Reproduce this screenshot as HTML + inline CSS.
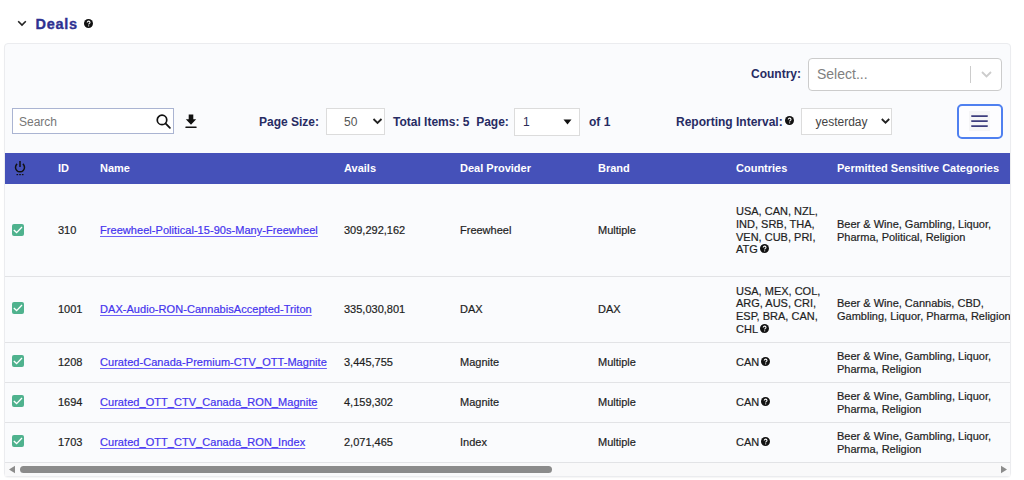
<!DOCTYPE html>
<html><head><meta charset="utf-8">
<style>
*{box-sizing:border-box;margin:0;padding:0}
html,body{width:1024px;height:480px;overflow:hidden;background:#fff;font-family:"Liberation Sans",sans-serif;}
.abs{position:absolute}
.title{position:absolute;left:35.5px;top:15px;font-size:14.5px;letter-spacing:0.7px;-webkit-text-stroke:0.35px #2e3192;font-weight:bold;color:#2e3192;line-height:19px}
.help{position:absolute;width:9px;height:9px;border-radius:50%;background:#111;color:#fff;font-size:8px;font-weight:bold;line-height:9px;text-align:center}
.panel{position:absolute;left:4px;top:43px;width:1007px;height:434px;border:1px solid #ebecef;border-radius:4px;background:#fafbfd;box-shadow:0 1px 1px rgba(0,0,0,0.04)}
.lbl{position:absolute;font-size:12px;font-weight:bold;color:#272b63;line-height:14px;white-space:pre}
.sel{position:absolute;background:#fff;border:1px solid #dcdcdc;font-size:12px;color:#444}
.thead{position:absolute;left:5px;top:153px;width:1005px;height:31px;background:#4551b9}
.th{position:absolute;top:9px;font-size:11px;font-weight:bold;color:#fff;line-height:13px;white-space:nowrap}
.row{position:absolute;left:5px;width:1005px;border-bottom:1px solid #e2e3e6;overflow:hidden}
.cell{position:absolute;top:0;bottom:0;padding-bottom:1px;display:flex;align-items:center;font-size:11px;color:#1e1e1e;white-space:nowrap;-webkit-text-stroke:0.2px currentColor}
.cell a{color:#4433ee;text-decoration:underline;text-decoration-color:#6d60f6;text-underline-offset:1.6px;letter-spacing:0.05px}
.ml{white-space:nowrap;line-height:12.65px;position:relative;top:1px}
.cb{position:absolute;left:7px;width:12px;height:12px;border-radius:2px;background:#4fb28e}
.cb svg{display:block}
.qi{display:inline-block;width:9px;height:9px;vertical-align:0px;margin-left:2px}
</style></head>
<body>
<!-- title -->
<svg class="abs" style="left:17px;top:20.4px" width="10" height="7" viewBox="0 0 10 7"><path d="M1.2 1.3 L5 5.1 L8.8 1.3" fill="none" stroke="#222" stroke-width="1.6"/></svg>
<div class="title">Deals</div>
<svg class="abs" style="left:84px;top:19px" width="9" height="9" viewBox="0 0 9 9"><circle cx="4.5" cy="4.5" r="4.5" fill="#111"/><path d="M3.2 3.6 C3.2 2.7 3.8 2.1 4.6 2.1 C5.4 2.1 6 2.6 6 3.4 C6 4.3 4.7 4.5 4.7 5.4" fill="none" stroke="#fff" stroke-width="1.05"/><circle cx="4.7" cy="6.8" r="0.6" fill="#fff"/></svg>

<div class="panel"></div>

<!-- toolbar row 1 -->
<div class="lbl" style="left:751px;top:67px">Country:</div>
<div class="abs" style="left:808px;top:58px;width:194px;height:33px;background:#fff;border:1px solid #cccccc;border-radius:4px"></div>
<div class="abs" style="left:817px;top:66px;font-size:14px;color:#808080;line-height:16px">Select...</div>
<div class="abs" style="left:970px;top:66px;width:1px;height:17px;background:#cccccc"></div>
<svg class="abs" style="left:980px;top:70px" width="13" height="9" viewBox="0 0 13 9"><path d="M2 2 L6.5 6.5 L11 2" fill="none" stroke="#cccccc" stroke-width="1.8"/></svg>

<!-- toolbar row 2 -->
<div class="abs" style="left:12px;top:108px;width:162px;height:26px;background:#fff;border:1px solid #aab4d2"></div>
<div class="abs" style="left:19px;top:114.5px;font-size:12px;color:#777;line-height:14px">Search</div>
<svg class="abs" style="left:155px;top:113px" width="18" height="18" viewBox="0 0 18 18"><circle cx="7" cy="6.9" r="4.75" fill="none" stroke="#111" stroke-width="1.7"/><path d="M10.5 10.4 L14.9 14.8" stroke="#111" stroke-width="1.8" stroke-linecap="round"/></svg>
<svg class="abs" style="left:184px;top:113px" width="14" height="16" viewBox="0 0 14 16"><path d="M4.7 1.4 H9.3 V6.2 H12.2 L7 11.8 L1.8 6.2 H4.7 Z" fill="#111"/><rect x="1.4" y="13.5" width="11.2" height="1.6" rx="0.5" fill="#111"/></svg>

<div class="lbl" style="left:259px;top:115px">Page Size:</div>
<div class="sel" style="left:326px;top:108px;width:59px;height:27px"></div>
<div class="abs" style="left:344px;top:115px;font-size:12px;color:#555;line-height:14px">50</div>
<svg class="abs" style="left:372px;top:117px" width="11" height="8" viewBox="0 0 11 8"><path d="M1.5 2 L5.5 6 L9.5 2" fill="none" stroke="#222" stroke-width="1.8"/></svg>

<div class="lbl" style="left:393px;top:115px">Total Items: 5  Page:</div>
<div class="sel" style="left:514px;top:108px;width:66px;height:28px"></div>
<div class="abs" style="left:523px;top:115px;font-size:12px;color:#2b2b55;line-height:14px">1</div>
<svg class="abs" style="left:563px;top:119px" width="9" height="6" viewBox="0 0 9 6"><path d="M0.5 0.5 H8.5 L4.5 5.5 Z" fill="#111"/></svg>
<div class="lbl" style="left:589px;top:115px">of 1</div>

<div class="lbl" style="left:676px;top:115px">Reporting Interval:</div>
<svg class="abs" style="left:785px;top:116px" width="9" height="9" viewBox="0 0 9 9"><circle cx="4.5" cy="4.5" r="4.5" fill="#111"/><path d="M3.2 3.6 C3.2 2.7 3.8 2.1 4.6 2.1 C5.4 2.1 6 2.6 6 3.4 C6 4.3 4.7 4.5 4.7 5.4" fill="none" stroke="#fff" stroke-width="1.05"/><circle cx="4.7" cy="6.8" r="0.6" fill="#fff"/></svg>
<div class="sel" style="left:801px;top:108px;width:91px;height:27px"></div>
<div class="abs" style="left:815.5px;top:114.5px;font-size:12px;color:#444;line-height:14px">yesterday</div>
<svg class="abs" style="left:879.5px;top:117.3px" width="11" height="8" viewBox="0 0 11 8"><path d="M1.8 2 L5.5 5.7 L9.2 2" fill="none" stroke="#222" stroke-width="1.8"/></svg>

<div class="abs" style="left:956.5px;top:103.5px;width:46px;height:35px;border:2px solid #4f80f0;border-radius:5px;background:#fdfdff"></div>
<div class="abs" style="left:969px;top:111px;width:21px;height:20px;background:#f5f5f7"></div>
<svg class="abs" style="left:970px;top:113px" width="19" height="16" viewBox="0 0 19 16"><path d="M1.8 3.1 H17.2 M1.8 8.1 H17.2 M1.8 13.1 H17.2" stroke="#3d3d7e" stroke-width="1.6" stroke-linecap="round"/></svg>

<!-- table header -->
<div class="thead">
  <svg class="abs" style="left:9px;top:8px" width="12" height="15" viewBox="0 0 12 15"><path d="M3.1 2.9 A4.5 4.5 0 1 0 8.9 2.9" fill="none" stroke="#111" stroke-width="1.5"/><path d="M6 0 V6" stroke="#111" stroke-width="1.5"/><rect x="2.5" y="13" width="1.6" height="1.2" fill="#111"/><rect x="5.2" y="13" width="1.6" height="1.2" fill="#111"/><rect x="7.9" y="13" width="1.6" height="1.2" fill="#111"/></svg>
  <div class="th" style="left:53px">ID</div>
  <div class="th" style="left:95px">Name</div>
  <div class="th" style="left:339px">Avails</div>
  <div class="th" style="left:455px">Deal Provider</div>
  <div class="th" style="left:593px">Brand</div>
  <div class="th" style="left:731px">Countries</div>
  <div class="th" style="left:832px">Permitted Sensitive Categories</div>
</div>

<!-- rows -->
<div class="row" style="top:184px;height:93px">
  <div class="cb" style="top:40px"><svg width="12" height="12" viewBox="0 0 12 12"><path d="M1.8 6 L4.6 8.6 L10 3" fill="none" stroke="#fff" stroke-width="1.35"/></svg></div>
  <div class="cell" style="left:53px">310</div>
  <div class="cell" style="left:95px"><a>Freewheel-Political-15-90s-Many-Freewheel</a></div>
  <div class="cell" style="left:339px">309,292,162</div>
  <div class="cell" style="left:455px">Freewheel</div>
  <div class="cell" style="left:593px">Multiple</div>
  <div class="cell" style="left:731px"><div class="ml">USA, CAN, NZL,<br>IND, SRB, THA,<br>VEN, CUB, PRI,<br>ATG<svg class="qi" viewBox="0 0 9 9"><circle cx="4.5" cy="4.5" r="4.5" fill="#111"/><path d="M3.2 3.6 C3.2 2.7 3.8 2.1 4.6 2.1 C5.4 2.1 6 2.6 6 3.4 C6 4.3 4.7 4.5 4.7 5.4" fill="none" stroke="#fff" stroke-width="1.05"/><circle cx="4.7" cy="6.8" r="0.6" fill="#fff"/></svg></div></div>
  <div class="cell" style="left:832px"><div class="ml">Beer &amp; Wine, Gambling, Liquor,<br>Pharma, Political, Religion</div></div>
</div>
<div class="row" style="top:277px;height:66px">
  <div class="cb" style="top:25px"><svg width="12" height="12" viewBox="0 0 12 12"><path d="M1.8 6 L4.6 8.6 L10 3" fill="none" stroke="#fff" stroke-width="1.35"/></svg></div>
  <div class="cell" style="left:53px">1001</div>
  <div class="cell" style="left:95px"><a>DAX-Audio-RON-CannabisAccepted-Triton</a></div>
  <div class="cell" style="left:339px">335,030,801</div>
  <div class="cell" style="left:455px">DAX</div>
  <div class="cell" style="left:593px">DAX</div>
  <div class="cell" style="left:731px"><div class="ml">USA, MEX, COL,<br>ARG, AUS, CRI,<br>ESP, BRA, CAN,<br>CHL<svg class="qi" viewBox="0 0 9 9"><circle cx="4.5" cy="4.5" r="4.5" fill="#111"/><path d="M3.2 3.6 C3.2 2.7 3.8 2.1 4.6 2.1 C5.4 2.1 6 2.6 6 3.4 C6 4.3 4.7 4.5 4.7 5.4" fill="none" stroke="#fff" stroke-width="1.05"/><circle cx="4.7" cy="6.8" r="0.6" fill="#fff"/></svg></div></div>
  <div class="cell" style="left:832px"><div class="ml">Beer &amp; Wine, Cannabis, CBD,<br>Gambling, Liquor, Pharma, Religion</div></div>
</div>
<div class="row" style="top:343px;height:40px">
  <div class="cb" style="top:12px"><svg width="12" height="12" viewBox="0 0 12 12"><path d="M1.8 6 L4.6 8.6 L10 3" fill="none" stroke="#fff" stroke-width="1.35"/></svg></div>
  <div class="cell" style="left:53px">1208</div>
  <div class="cell" style="left:95px"><a>Curated-Canada-Premium-CTV_OTT-Magnite</a></div>
  <div class="cell" style="left:339px">3,445,755</div>
  <div class="cell" style="left:455px">Magnite</div>
  <div class="cell" style="left:593px">Multiple</div>
  <div class="cell" style="left:731px"><div>CAN<svg class="qi" viewBox="0 0 9 9"><circle cx="4.5" cy="4.5" r="4.5" fill="#111"/><path d="M3.2 3.6 C3.2 2.7 3.8 2.1 4.6 2.1 C5.4 2.1 6 2.6 6 3.4 C6 4.3 4.7 4.5 4.7 5.4" fill="none" stroke="#fff" stroke-width="1.05"/><circle cx="4.7" cy="6.8" r="0.6" fill="#fff"/></svg></div></div>
  <div class="cell" style="left:832px"><div class="ml">Beer &amp; Wine, Gambling, Liquor,<br>Pharma, Religion</div></div>
</div>
<div class="row" style="top:383px;height:40px">
  <div class="cb" style="top:12px"><svg width="12" height="12" viewBox="0 0 12 12"><path d="M1.8 6 L4.6 8.6 L10 3" fill="none" stroke="#fff" stroke-width="1.35"/></svg></div>
  <div class="cell" style="left:53px">1694</div>
  <div class="cell" style="left:95px"><a>Curated_OTT_CTV_Canada_RON_Magnite</a></div>
  <div class="cell" style="left:339px">4,159,302</div>
  <div class="cell" style="left:455px">Magnite</div>
  <div class="cell" style="left:593px">Multiple</div>
  <div class="cell" style="left:731px"><div>CAN<svg class="qi" viewBox="0 0 9 9"><circle cx="4.5" cy="4.5" r="4.5" fill="#111"/><path d="M3.2 3.6 C3.2 2.7 3.8 2.1 4.6 2.1 C5.4 2.1 6 2.6 6 3.4 C6 4.3 4.7 4.5 4.7 5.4" fill="none" stroke="#fff" stroke-width="1.05"/><circle cx="4.7" cy="6.8" r="0.6" fill="#fff"/></svg></div></div>
  <div class="cell" style="left:832px"><div class="ml">Beer &amp; Wine, Gambling, Liquor,<br>Pharma, Religion</div></div>
</div>
<div class="row" style="top:423px;height:40px">
  <div class="cb" style="top:12px"><svg width="12" height="12" viewBox="0 0 12 12"><path d="M1.8 6 L4.6 8.6 L10 3" fill="none" stroke="#fff" stroke-width="1.35"/></svg></div>
  <div class="cell" style="left:53px">1703</div>
  <div class="cell" style="left:95px"><a>Curated_OTT_CTV_Canada_RON_Index</a></div>
  <div class="cell" style="left:339px">2,071,465</div>
  <div class="cell" style="left:455px">Index</div>
  <div class="cell" style="left:593px">Multiple</div>
  <div class="cell" style="left:731px"><div>CAN<svg class="qi" viewBox="0 0 9 9"><circle cx="4.5" cy="4.5" r="4.5" fill="#111"/><path d="M3.2 3.6 C3.2 2.7 3.8 2.1 4.6 2.1 C5.4 2.1 6 2.6 6 3.4 C6 4.3 4.7 4.5 4.7 5.4" fill="none" stroke="#fff" stroke-width="1.05"/><circle cx="4.7" cy="6.8" r="0.6" fill="#fff"/></svg></div></div>
  <div class="cell" style="left:832px"><div class="ml">Beer &amp; Wine, Gambling, Liquor,<br>Pharma, Religion</div></div>
</div>

<!-- scrollbar -->
<div class="abs" style="left:5px;top:463px;width:1005px;height:13px;background:#f9f9fa"></div>
<svg class="abs" style="left:8px;top:465px" width="8" height="9" viewBox="0 0 8 9"><path d="M1 4.5 L7 0.8 V8.2 Z" fill="#8c8c8c"/></svg>
<div class="abs" style="left:20px;top:466px;width:532px;height:7px;border-radius:3.5px;background:#8b8b8b"></div>
<svg class="abs" style="left:1000px;top:465px" width="8" height="9" viewBox="0 0 8 9"><path d="M7 4.5 L1 0.8 V8.2 Z" fill="#8c8c8c"/></svg>
</body></html>
